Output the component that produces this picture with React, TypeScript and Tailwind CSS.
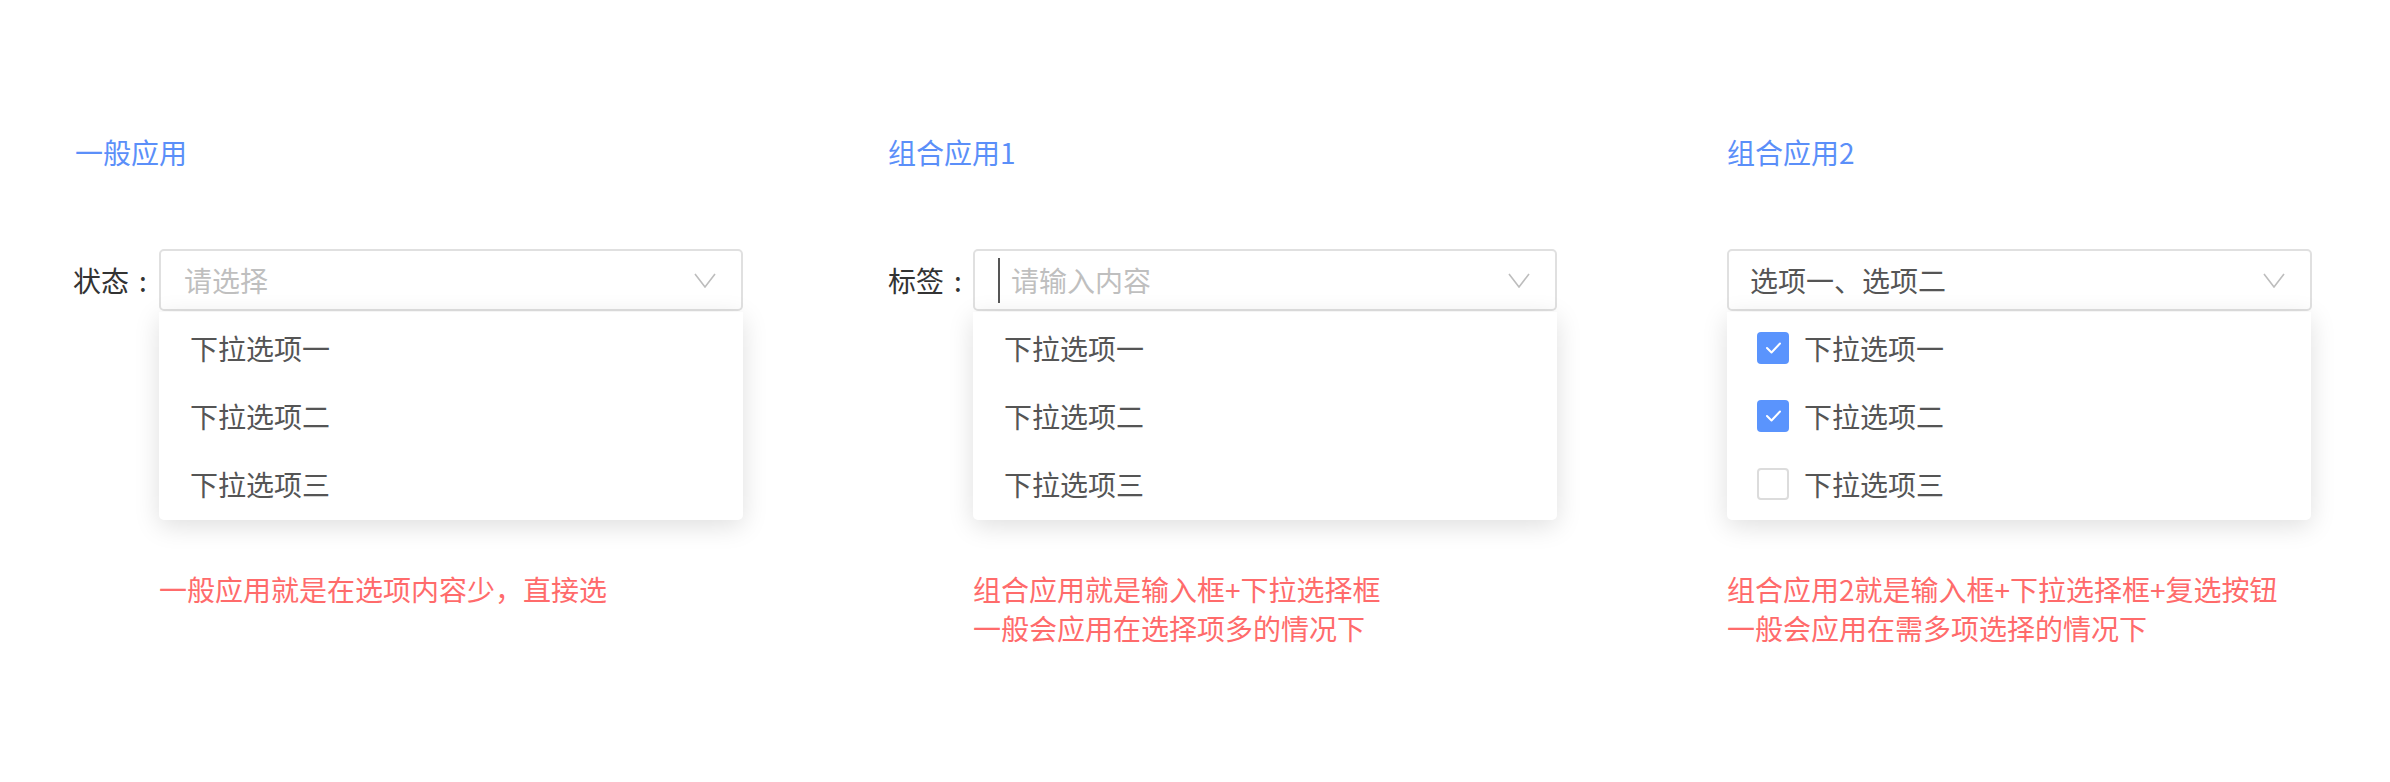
import React from "react";

const Chevron = () => (
  <svg width="22" height="15" viewBox="0 0 22 15" fill="none" className="shrink-0">
    <polyline points="1,1 11,14 21,1" stroke="#bdbdbd" strokeWidth="1.6" fill="none" />
  </svg>
);

const Check = () => (
  <svg width="17" height="14" viewBox="0 0 17 14" fill="none">
    <polyline points="2,7 6.5,11.5 15,2.5" stroke="#ffffff" strokeWidth="2" fill="none" strokeLinecap="round" strokeLinejoin="round" />
  </svg>
);

const items = ["下拉选项一", "下拉选项二", "下拉选项三"];

function Dropdown({ checks }: { checks?: boolean[] }) {
  return (
    <div className="w-[584px] bg-white rounded-b-[5px] py-[2px] shadow-[0_6px_26px_rgba(0,0,0,0.13)]">
      {items.map((t, i) => (
        <div key={t} className={`h-[68px] flex items-center ${checks ? "pl-[30px]" : "pl-[31px]"}`}>
          {checks &&
            (checks[i] ? (
              <div className="w-[32px] h-[32px] rounded-[4px] bg-[#5a94fd] flex items-center justify-center mr-[15px]">
                <Check />
              </div>
            ) : (
              <div className="w-[32px] h-[32px] rounded-[4px] border-2 border-[#dcdcdc] bg-white mr-[15px]" />
            ))}
          <span className="text-[28px] leading-[32px] text-[#555555]">{t}</span>
        </div>
      ))}
    </div>
  );
}

function Note({ lines }: { lines: string[] }) {
  return (
    <div className="mt-[50px] text-[28px] leading-[39px] text-[#ff6b6b]">
      {lines.map((l) => (
        <div key={l}>{l}</div>
      ))}
    </div>
  );
}

function Label({ text, narrow }: { text: string; narrow?: boolean }) {
  return (
    <div className={`${narrow ? "w-[85px]" : "w-[86px]"} shrink-0 h-[62px] flex items-center text-[28px] text-[#333333]`}>
      <span>{text}</span>
      <span className="ml-[10px]">:</span>
    </div>
  );
}

export default function App() {
  return (
    <div className="w-[2390px] h-[782px] bg-white flex pl-[73px] pt-[136px] font-['Noto_Sans_CJK_SC','Noto_Sans',sans-serif]">
      {/* Column 1 */}
      <div className="w-[815px] shrink-0">
        <div className="text-[28px] leading-[32px] text-[#5b8ff9] pl-[2px]">一般应用</div>
        <div className="flex mt-[81px]">
          <Label text="状态" />
          <div>
            <div className="w-[584px] h-[62px] border-2 border-[#e0e0e0] rounded-[5px] flex items-center justify-between pl-[23px] pr-[25px] bg-white">
              <span className="text-[28px] text-[#bfbfbf]">请选择</span>
              <Chevron />
            </div>
            <div className="mt-[1px]">
              <Dropdown />
            </div>
            <Note lines={["一般应用就是在选项内容少，直接选"]} />
          </div>
        </div>
      </div>

      {/* Column 2 */}
      <div className="w-[839px] shrink-0">
        <div className="text-[28px] leading-[32px] text-[#5b8ff9]">组合应用1</div>
        <div className="flex mt-[81px]">
          <Label text="标签" narrow />
          <div>
            <div className="w-[584px] h-[62px] border-2 border-[#e0e0e0] rounded-[5px] flex items-center justify-between pl-[23px] pr-[25px] bg-white">
              <div className="flex items-center">
                <div className="w-[2px] h-[45px] bg-[#555555] mr-[11px]" />
                <span className="text-[28px] text-[#bfbfbf]">请输入内容</span>
              </div>
              <Chevron />
            </div>
            <div className="mt-[1px]">
              <Dropdown />
            </div>
            <Note lines={["组合应用就是输入框+下拉选择框", "一般会应用在选择项多的情况下"]} />
          </div>
        </div>
      </div>

      {/* Column 3 */}
      <div className="flex-1">
        <div className="text-[28px] leading-[32px] text-[#5b8ff9]">组合应用2</div>
        <div className="mt-[81px]">
          <div className="w-[585px] h-[62px] border-2 border-[#e0e0e0] rounded-[5px] flex items-center justify-between pl-[21px] pr-[25px] bg-white">
            <span className="text-[28px] text-[#555555]">选项一、选项二</span>
            <Chevron />
          </div>
          <div className="mt-[1px]">
            <Dropdown checks={[true, true, false]} />
          </div>
          <Note lines={["组合应用2就是输入框+下拉选择框+复选按钮", "一般会应用在需多项选择的情况下"]} />
        </div>
      </div>
    </div>
  );
}
